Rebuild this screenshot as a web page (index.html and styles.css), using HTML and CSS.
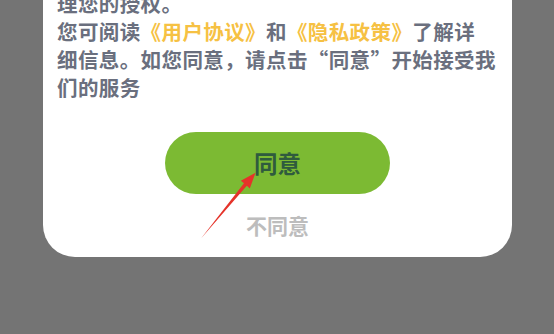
FILE: index.html
```html
<!DOCTYPE html>
<html lang="zh-CN">
<head>
<meta charset="utf-8">
<title>用户协议与隐私政策</title>
<link rel="stylesheet" href="styles.css">
</head>
<body>
<div class="page">
  <div class="card">
    <p class="notice">我们会严格按照法律法规的要求存储、使用和处<br>理您的授权。<br>您可阅读<span class="link">《用户协议》</span>和<span class="link">《隐私政策》</span>了解详<br>细信息。如您同意，请点击“同意”开始接受我<br>们的服务</p>
    <div class="actions">
      <button class="agree">同意</button>
      <button class="disagree">不同意</button>
    </div>
  </div>
</div>
<svg class="arrow" width="554" height="334" viewBox="0 0 554 334" aria-hidden="true">
  <polygon points="201,238.5 244,183.2 240.8,180.8 255.5,172.8 249.8,188.4 246.8,185.7" fill="#e5332a"/>
</svg>
</body>
</html>
```

FILE: styles.css
```css
html, body {
  margin: 0;
  padding: 0;
}
body {
  background: #747474;
  width: 554px;
  height: 334px;
  overflow: hidden;
  position: relative;
  font-family: "Noto Sans CJK SC", "Noto Sans", sans-serif;
}
.page {
  display: flex;
  justify-content: flex-start;
  padding-left: 43px;
}
.card {
  width: 469px;
  box-sizing: border-box;
  margin-top: -60px;
  padding: 21px 10px 17px 14px;
  background: #ffffff;
  border-radius: 32px;
  display: flex;
  flex-direction: column;
}
.notice {
  margin: 0;
  font-size: 20.5px;
  line-height: 28px;
  letter-spacing: 0.4px;
  font-weight: 700;
  color: #6a6f7e;
  white-space: nowrap;
}
.link {
  color: #f6c143;
}
.actions {
  display: flex;
  flex-direction: column;
  align-items: center;
  margin-top: 31px;
  padding-right: 4px;
}
.agree {
  width: 225px;
  height: 62px;
  border: none;
  border-radius: 31px;
  background: #7cba33;
  color: #2f5b3e;
  font-family: inherit;
  font-size: 23.5px;
  font-weight: 700;
  padding: 0;
  cursor: pointer;
}
.disagree {
  margin-top: 16px;
  border: none;
  background: none;
  padding: 0;
  font-family: inherit;
  font-size: 21px;
  line-height: 30px;
  font-weight: 700;
  color: #bdbdbd;
}
.arrow {
  position: absolute;
  top: 0;
  left: 0;
  pointer-events: none;
}
```
